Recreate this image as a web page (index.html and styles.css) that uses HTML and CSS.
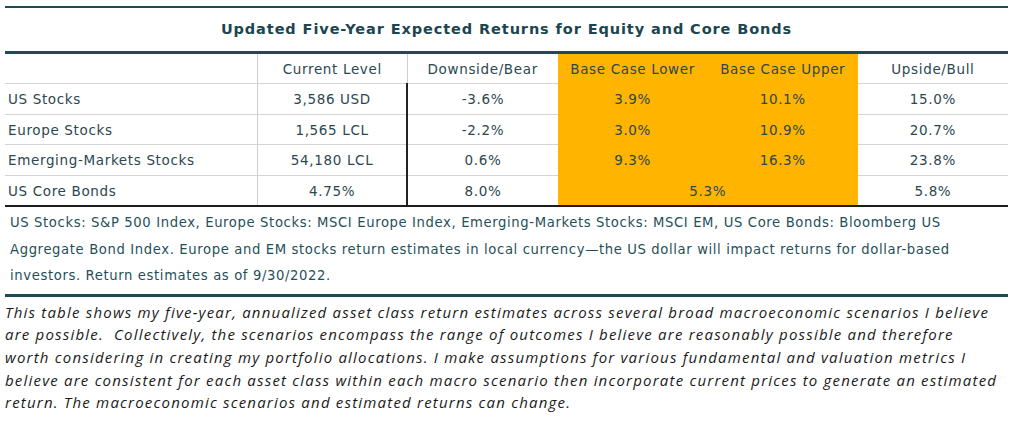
FILE: index.html
```html
<!DOCTYPE html>
<html>
<head>
<meta charset="utf-8">
<link rel="stylesheet" href="styles.css">
</head>
<body>
<div class="figure">
  <div class="title">Updated Five-Year Expected Returns for Equity and Core Bonds</div>
  <table class="returns">
    <colgroup>
      <col class="c-label"><col class="c-num"><col class="c-num"><col class="c-num"><col class="c-num"><col class="c-num">
    </colgroup>
    <tr class="head">
      <td class="label sep"></td>
      <td class="sep">Current Level</td>
      <td>Downside/Bear</td>
      <td class="base">Base Case Lower</td>
      <td class="base">Base Case Upper</td>
      <td>Upside/Bull</td>
    </tr>
    <tr class="r1">
      <td class="label sep">US Stocks</td>
      <td class="dark">3,586 USD</td>
      <td>-3.6%</td>
      <td class="base">3.9%</td>
      <td class="base">10.1%</td>
      <td>15.0%</td>
    </tr>
    <tr class="r2">
      <td class="label sep">Europe Stocks</td>
      <td class="dark">1,565 LCL</td>
      <td>-2.2%</td>
      <td class="base">3.0%</td>
      <td class="base">10.9%</td>
      <td>20.7%</td>
    </tr>
    <tr class="r3">
      <td class="label sep">Emerging-Markets Stocks</td>
      <td class="dark">54,180 LCL</td>
      <td>0.6%</td>
      <td class="base">9.3%</td>
      <td class="base">16.3%</td>
      <td>23.8%</td>
    </tr>
    <tr class="r4 last">
      <td class="label sep">US Core Bonds</td>
      <td class="dark">4.75%</td>
      <td>8.0%</td>
      <td class="base" colspan="2">5.3%</td>
      <td>5.8%</td>
    </tr>
  </table>
  <p class="note">US Stocks: S&amp;P 500 Index, Europe Stocks: MSCI Europe Index, Emerging-Markets Stocks: MSCI EM, US Core Bonds: Bloomberg US<br>Aggregate Bond Index. Europe and EM stocks return estimates in local currency—the US dollar will impact returns for dollar-based<br>investors. Return estimates as of 9/30/2022.</p>
  <p class="desc">This table shows my five-year, annualized asset class return estimates across several broad macroeconomic scenarios I believe<br>are possible.&nbsp; Collectively, the scenarios encompass the range of outcomes I believe are reasonably possible and therefore<br>worth considering in creating my portfolio allocations. I make assumptions for various fundamental and valuation metrics I<br>believe are consistent for each asset class within each macro scenario then incorporate current prices to generate an estimated<br>return. The macroeconomic scenarios and estimated returns can change.</p>
</div>
</body>
</html>
```
FILE: styles.css
```css
html, body {
  margin: 0;
  padding: 0;
  background: #ffffff;
}
body {
  font-family: "DejaVu Sans", "Noto Sans", sans-serif;
  color: #2b4850;
}
.figure {
  width: 1003px;
  margin: 6px 0 0 5px;
}
.title {
  border-top: 2px solid #1d4b55;
  border-bottom: 3px solid #1d4b55;
  height: 43px;
  line-height: 42px;
  text-align: center;
  font-weight: 700;
  font-size: 14.5px;
  letter-spacing: 0.9px;
  color: #1b4550;
}
.returns {
  width: 1003px;
  border-collapse: collapse;
  table-layout: fixed;
  font-size: 13.5px;
  letter-spacing: 0.65px;
  border-bottom: 2px solid #1c1c1c;
}
.c-label { width: 252px; }
.c-num { width: 150px; }
.returns td {
  padding: 0;
  text-align: center;
  border-bottom: 1px solid #d4d4d4;
  white-space: nowrap;
}
.returns td.label {
  text-align: left;
  padding-left: 3px;
}
.returns td.sep {
  border-right: 1px solid #cfcfcf;
}
.returns td.dark {
  border-right: 2px solid #222222;
}
.returns td.base {
  background: #ffb400;
  border-bottom-color: #ffb400;
}
.returns tr.last td {
  border-bottom: 2px solid #1c1c1c;
}
.head td { height: 29px; }
.r1 td { height: 30px; }
.r2 td { height: 29px; }
.r3 td { height: 30px; }
.r4 td { height: 29px; }
.note {
  margin: 2px 0 0 0;
  padding: 1px 0 4px 5px;
  font-size: 13.2px;
  letter-spacing: 0.62px;
  line-height: 26.5px;
  color: #1f5059;
  border-bottom: 3px solid #1d4b55;
  white-space: nowrap;
}
.desc {
  margin: 4px 0 0 0;
  font-family: "Open Sans", "Noto Sans", sans-serif;
  font-style: italic;
  font-size: 15px;
  letter-spacing: 1.2px;
  line-height: 22.7px;
  color: #1a1a1a;
  white-space: nowrap;
}
```
